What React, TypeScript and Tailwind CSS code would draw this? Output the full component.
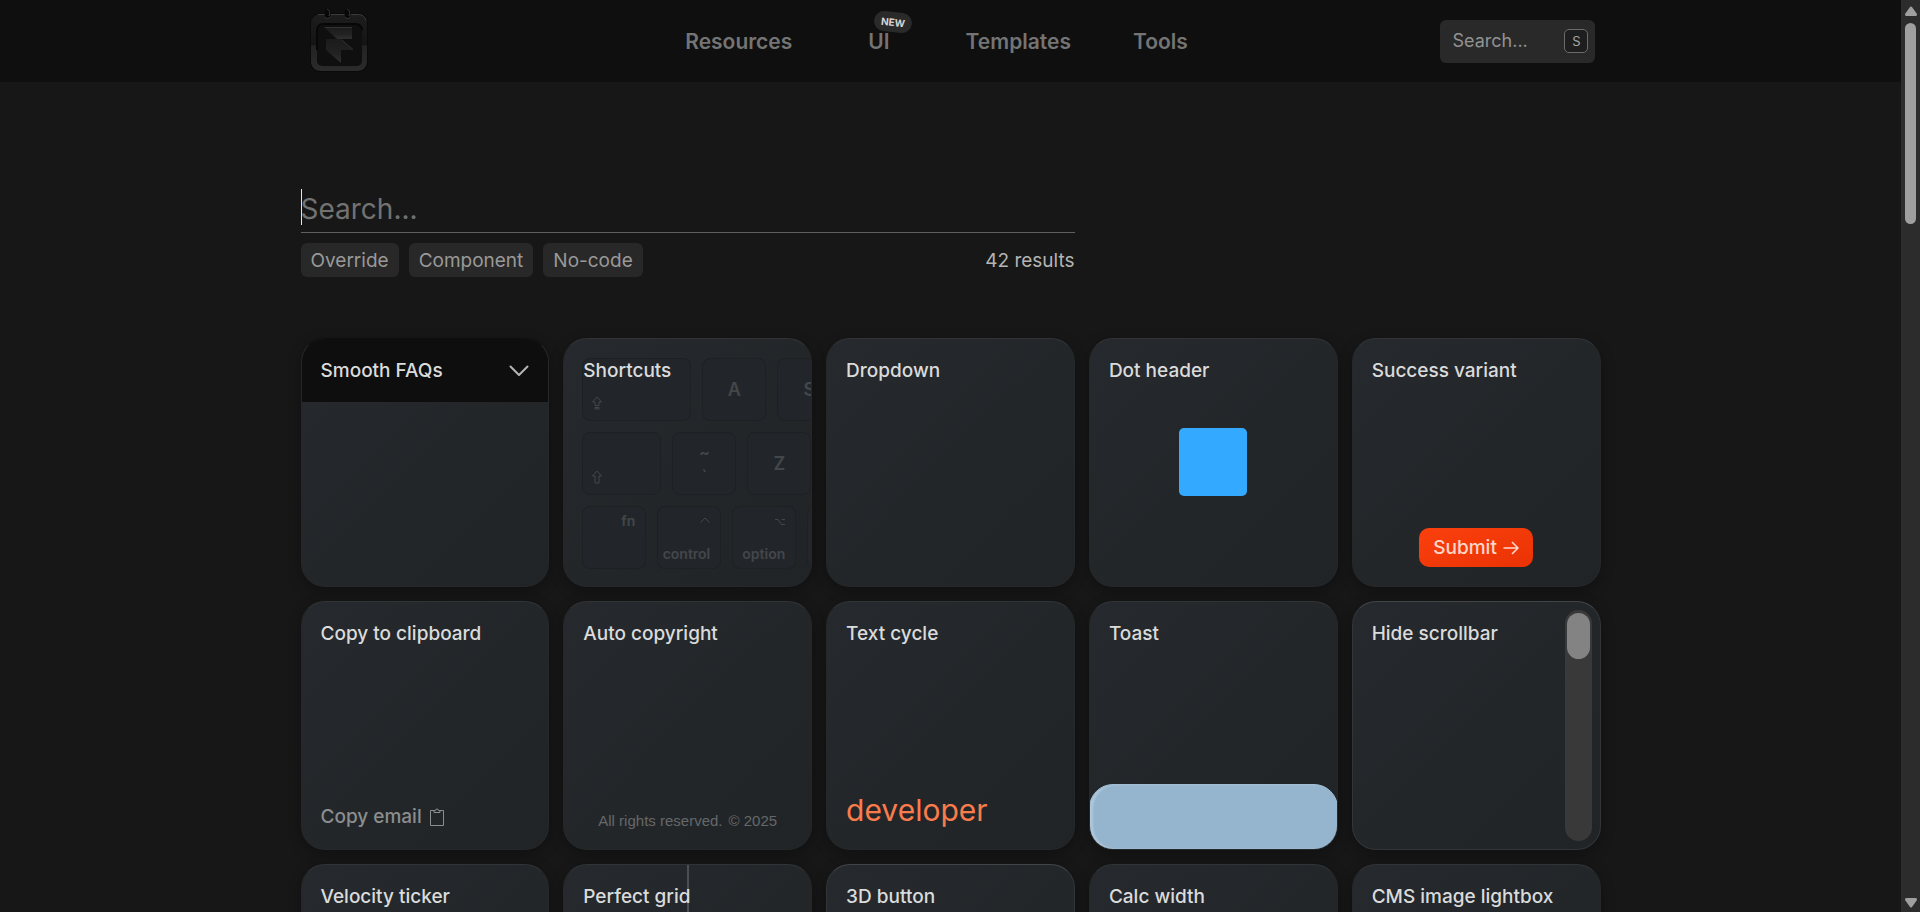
import { useState } from "react";
import type { ReactNode } from "react";

const TAGS = ["Override", "Component", "No-code"];

function Logo() {
  return (
    <svg className="h-[66px] w-[60px]" viewBox="0 0 60 66" fill="none" aria-hidden="true">
      <defs>
        <linearGradient id="frame" x1="0" y1="0" x2="0" y2="1">
          <stop offset="0" stopColor="#1d1d1d" />
          <stop offset="0.54" stopColor="#141414" />
          <stop offset="0.56" stopColor="#232323" />
          <stop offset="1" stopColor="#2b2b2b" />
        </linearGradient>
        <linearGradient id="mark" x1="0" y1="0" x2="0" y2="1">
          <stop offset="0" stopColor="#1b1b1b" />
          <stop offset="0.6" stopColor="#222222" />
          <stop offset="1" stopColor="#2f2f2f" />
        </linearGradient>
      </defs>
      <rect x="1" y="7" width="58" height="59" rx="10" fill="#0a0a0a" />
      <rect x="2" y="8" width="56" height="57" rx="9" fill="url(#frame)" />
      <path d="M9 8.500h8M22 8.500h14M42 8.500h7c4 0 7 2 8 6" stroke="#3c3c3c" strokeWidth="1" />
      <rect x="8" y="18" width="45" height="42" rx="5" fill="#0f0f0f" />
      <path d="M8 44V24a6 6 0 0 1 6-6h33a6 6 0 0 1 6 6" stroke="#070707" strokeWidth="2" />
      <path d="M15 21h28v12H28z" fill="url(#mark)" />
      <path d="M17 33h14l13 11H32v13L17 44z" fill="url(#mark)" />
      <path d="M16 21.500h27M32 33.500l12 10" stroke="#333333" />
      <ellipse cx="18.500" cy="7.500" rx="3" ry="5" fill="#080808" />
      <ellipse cx="38.500" cy="7.500" rx="3" ry="5" fill="#080808" />
      <path d="M18 3c3 1 3 4 2 7M16 11c1 2 4 2 5 0M38 3c3 1 3 4 2 7M36 11c1 2 4 2 5 0" stroke="#3a3a3a" />
    </svg>
  );
}

function ShiftIcon({ caps = false }: { caps?: boolean }) {
  return (
    <svg className="h-3.5 w-3" viewBox="0 0 12 14" fill="none" stroke="currentColor" strokeLinejoin="round">
      {caps ? (
        <path d="M6 1 1.500 6H4v3.500h4V6h2.500zM4 11.500h4V13H4z" />
      ) : (
        <path d="M6 1 1.500 6H4v7h4V6h2.500z" />
      )}
    </svg>
  );
}

function Card({ title, outlined = false, children }: { title: string; outlined?: boolean; children?: ReactNode }) {
  return (
    <article
      className={`relative flex aspect-square flex-col overflow-hidden rounded-3xl border bg-linear-to-br from-[#26292d] to-[#212426] shadow-[0_4px_14px_rgba(0,0,0,0.3)] ${
        outlined ? "border-[#323638] border-t-[#424547]" : "border-[#252829] border-t-[#303437]"
      }`}
    >
      <h2 className="relative z-10 px-[19px] pt-[18px] text-[19px] leading-7 font-medium text-[#dadbdb]">{title}</h2>
      {children}
    </article>
  );
}

function Key({ className = "w-16", children }: { className?: string; children?: ReactNode }) {
  return (
    <div
      className={`flex h-[63px] shrink-0 rounded-lg border border-[#1e2123] bg-[#22262a] text-[#43474a] ${className}`}
    >
      {children}
    </div>
  );
}

function Keyboard() {
  return (
    <div className="absolute inset-0 flex flex-col gap-[11px] pt-[19px] pl-[18px] text-sm leading-4 font-semibold">
      <div className="flex gap-[11px]">
        <Key className="w-[109px] items-end px-2 py-2.5">
          <ShiftIcon caps />
        </Key>
        <Key className="w-16 items-center justify-center text-lg">A</Key>
        <Key className="w-16 items-center justify-center text-lg">S</Key>
      </div>
      <div className="flex gap-[11px]">
        <Key className="w-[79px] items-end px-2 py-2.5">
          <ShiftIcon />
        </Key>
        <Key className="w-16 flex-col items-center justify-center gap-2 text-base leading-4">
          <span>~</span>
          <span>`</span>
        </Key>
        <Key className="w-16 items-center justify-center text-lg">Z</Key>
      </div>
      <div className="flex gap-[11px]">
        <Key className="w-16 justify-end px-2.5 py-1.5">fn</Key>
        <Key className="w-16 flex-col items-end justify-between px-2.5 pt-2.5 pb-1.5">
          <svg className="h-1.5 w-2.5" viewBox="0 0 10 6" fill="none" stroke="currentColor">
            <path d="M.5 5.500 5 1l4.500 4.500" />
          </svg>
          <span>control</span>
        </Key>
        <Key className="w-16 flex-col items-end justify-between px-2.5 pt-3 pb-1.5">
          <svg className="h-1.5 w-2.5" viewBox="0 0 10 6" fill="none" stroke="currentColor">
            <path d="M0 .5h3l3.500 5H10M6.500.5H10" />
          </svg>
          <span>option</span>
        </Key>
        <Key />
      </div>
    </div>
  );
}

function Scrollbar() {
  return (
    <div className="flex w-[19px] shrink-0 flex-col items-center bg-[#2c2c2c] pt-1.5 pb-1" aria-hidden="true">
      <svg className="h-2.5 w-3" viewBox="0 0 12 10" fill="#9f9f9f">
        <path d="M5 1q1-1 2 0l5 7q0 2-1 2H1Q0 10 0 8z" />
      </svg>
      <div className="mt-[7px] h-[201px] w-[11px] rounded-full bg-[#9f9f9f]" />
      <svg className="mt-auto h-2.5 w-3" viewBox="0 0 12 10" fill="#9f9f9f">
        <path d="M5 9q1 1 2 0l5-7q0-2-1-2H1Q0 0 0 2z" />
      </svg>
    </div>
  );
}

export default function App() {
  const [query, setQuery] = useState("");

  return (
    <div className="flex h-screen overflow-hidden bg-[#171717] font-['Inter',sans-serif]">
      <div className="min-w-0 flex-1">

        {/* Header */}
        <header className="bg-[#0f0f0f]">
          <div className="mx-auto flex h-[82px] max-w-[1300px] items-center justify-between pr-[5px]">
            <a href="#" aria-label="Home" className="w-[132px] pb-1 pl-2">
              <Logo />
            </a>
            <nav className="flex items-center gap-[62px] pt-0.5 text-[21px] font-semibold text-[#747474]">
              <a href="#resources">Resources</a>
              <a href="#ui" className="relative px-3.5">
                UI
                <span className="absolute -top-3.5 left-5 rotate-6 rounded-full bg-[#2a2a2a] px-[7px] py-0.5 text-[10px] leading-4 font-bold text-[#d6d6d6]">
                  NEW
                </span>
              </a>
              <a href="#templates">Templates</a>
              <a href="#tools">Tools</a>
            </nav>
            <button
              type="button"
              className="flex h-[43px] w-[155px] items-center justify-between rounded-md bg-[#292929] pr-[7px] pl-3 text-lg text-[#929292]"
            >
              Search...
              <kbd className="flex h-6 w-6 items-center justify-center rounded-[5px] border border-[#6b6b6b] bg-[#1e1e1e] font-['Inter',sans-serif] text-[13px] text-[#a5a5a5]">
                S
              </kbd>
            </button>
          </div>
        </header>

        <main className="mx-auto max-w-[1300px] pt-[105px]">

          {/* Search + filters */}
          <section className="max-w-[774px]">
            <div className="relative border-b border-[#606060] pt-px pb-[3px]">
              {query === "" && <span className="absolute top-0.5 left-0 h-9 w-px bg-[#e5e5e5]" />}
              <input
                type="text"
                aria-label="Search components"
                placeholder="Search..."
                value={query}
                onChange={(e) => setQuery(e.target.value)}
                className="block h-[41px] w-full bg-transparent text-[28px] text-[#e5e5e5] outline-none placeholder:text-[#727272]"
              />
            </div>
            <div className="mt-2.5 flex items-center gap-2.5 text-[19px]">
              {TAGS.map((tag) => (
                <button key={tag} type="button" className="h-[34px] rounded-md bg-[#282828] px-2.5 pt-0.5 text-[#999999]">
                  {tag}
                </button>
              ))}
              <p className="ml-auto pt-0.5 text-[#b4b4b4]">42 results</p>
            </div>
          </section>

          {/* Component grid */}
          <section className="mt-[61px] grid grid-cols-5 gap-3.5">
            <article className="flex aspect-square flex-col overflow-hidden rounded-3xl border border-[#252829] border-t-[#0e0e0e] bg-linear-to-br from-[#26292d] to-[#212426] shadow-[0_4px_14px_rgba(0,0,0,0.3)]">
              <div className="flex h-[63px] items-center justify-between bg-[#0e0e0e] px-[19px] pt-px">
                <h2 className="text-[19px] leading-7 font-medium text-[#dadbdb]">Smooth FAQs</h2>
                <svg className="h-3 w-5" viewBox="0 0 20 12" fill="none" stroke="#b4b4b4" strokeWidth="2">
                  <path d="M1.500 1.500 10 10l8.500-8.500" strokeLinecap="round" strokeLinejoin="round" />
                </svg>
              </div>
            </article>
            <Card title="Shortcuts">
              <Keyboard />
            </Card>
            <Card title="Dropdown" />
            <Card title="Dot header">
              <div className="absolute inset-0 flex items-center justify-center">
                <div className="h-[68px] w-[68px] rounded-[5px] bg-[#33aaff]" />
              </div>
            </Card>
            <Card title="Success variant">
              <button
                type="button"
                className="mx-auto mt-auto mb-[19px] flex h-[39px] items-center gap-1.5 rounded-[10px] bg-linear-to-br from-[#fa400d] to-[#eb3204] px-3.5 pt-0.5 text-[19px] font-medium text-[#ffd6ca]"
              >
                Submit
                <svg className="h-4 w-4" viewBox="0 0 16 16" fill="none" stroke="currentColor" strokeWidth="1.600">
                  <path d="M.5 8H15M9 2l6 6-6 6" strokeLinejoin="round" />
                </svg>
              </button>
            </Card>

            <Card title="Copy to clipboard">
              <button
                type="button"
                className="mt-auto mb-[18px] flex items-center gap-2 px-[19px] text-[19px] leading-7 font-medium text-[#8b8e8f]"
              >
                Copy email
                <svg className="h-[18px] w-3.5" viewBox="0 0 14 18" fill="none" stroke="currentColor">
                  <path d="M4 2.500H.5v15h13v-15H10" />
                  <path d="M4 4.500v-2h1.500a1.500 1.500 0 0 1 3 0H10v2z" />
                </svg>
              </button>
            </Card>
            <Card title="Auto copyright">
              <p className="mt-auto mb-[18px] flex justify-center gap-1.5 font-['Liberation_Sans',sans-serif] text-[15px] leading-5 text-[#65686a]">
                <span>All rights reserved.</span>
                <span>© 2025</span>
              </p>
            </Card>
            <Card title="Text cycle">
              <p className="mt-auto mb-[19px] px-[19px] text-[30px] leading-10 text-[#fa7c4c]">developer</p>
            </Card>
            <Card title="Toast">
              <div className="-mx-px mt-auto -mb-px h-[66px] shrink-0 rounded-3xl border border-[#a0bdd3] bg-[#95b5ce] shadow-[inset_3px_0_2px_rgba(255,255,255,0.25)]" />
            </Card>
            <Card title="Hide scrollbar" outlined>
              <div className="absolute top-2 right-2 bottom-2 w-[27px] rounded-full bg-[#393939] px-0.5 py-[3px]">
                <div className="h-[46px] rounded-full bg-[#848383]" />
              </div>
            </Card>

            <Card title="Velocity ticker" />
            <Card title="Perfect grid">
              <div className="absolute inset-y-0 left-1/2 w-0.5 -translate-x-1/2 bg-[#4d5052]" />
            </Card>
            <Card title="3D button" outlined />
            <Card title="Calc width" />
            <Card title="CMS image lightbox" />
          </section>
        </main>
      </div>

      <Scrollbar />
    </div>
  );
}
